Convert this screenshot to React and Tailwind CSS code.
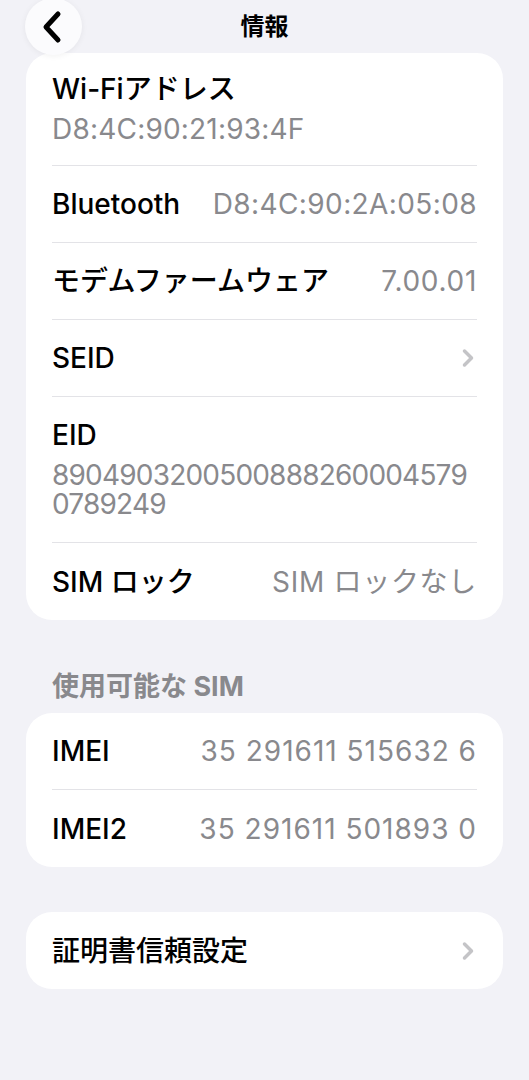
import { Fragment } from "react";
import { ChevronRight } from "lucide-react";

const font = {
  fontFamily: '"Inter", "Noto Sans CJK JP", sans-serif',
};

function Row({ label, value, chevron, last, track = "tracking-[0.7px]" }) {
  return (
    <div className="pl-[26px]">
      <div
        className={
          "mr-[26px] flex h-[77px] items-center justify-between " +
          (last ? "" : "border-b border-[#e3e3e7]")
        }
      >
        <span className="text-[28px] font-medium text-black">{label}</span>
        {value && (
          <span className={"text-[28px] text-[#89898d] " + track}>
            {value}
          </span>
        )}
        {chevron && (
          <ChevronRight
            size={28}
            strokeWidth={3}
            className="-mr-[5px] text-[#c4c4c7]"
          />
        )}
      </div>
    </div>
  );
}

function StackRow({ label, lines, first, track }) {
  return (
    <div className="pl-[26px]">
      <div
        className={
          "mr-[26px] border-b border-[#e3e3e7] " +
          (first ? "pt-[19px] pb-[21px]" : "pt-[21px] pb-[23px]")
        }
      >
        <div className="text-[28px] font-medium leading-[34px] text-black">
          {label}
        </div>
        <p
          className={
            "mt-[9px] text-[28px] leading-[29px] text-[#89898d] " + track
          }
        >
          {lines.map((l, i) => (
            <Fragment key={l}>
              {i > 0 && <br />}
              {l}
            </Fragment>
          ))}
        </p>
      </div>
    </div>
  );
}

export default function App() {
  return (
    <div className="min-h-[1080px] w-full bg-[#f2f2f7]" style={font}>
      <div className="relative flex h-[53px] items-center justify-center">
        <button className="absolute left-[25px] top-[-2px] flex h-[57px] w-[57px] items-center justify-center rounded-full bg-[#fbfbfd] shadow-[0_1px_6px_rgba(0,0,0,0.06)]">
          <svg width="22" height="34" viewBox="0 0 22 34" className="-ml-[4px]">
            <path
              d="M17 4 L5 17 L17 30"
              fill="none"
              stroke="#000"
              strokeWidth="5"
              strokeLinecap="round"
              strokeLinejoin="round"
            />
          </svg>
        </button>
        <h1 className="text-[24px] font-bold text-black">情報</h1>
      </div>

      <div className="mx-[26px] overflow-hidden rounded-[26px] bg-white">
        <StackRow
          first
          label="Wi-Fiアドレス"
          lines={["D8:4C:90:21:93:4F"]}
          track="tracking-[0.2px]"
        />
        <Row
          label="Bluetooth"
          value="D8:4C:90:2A:05:08"
          track="tracking-[0.4px]"
        />
        <Row label="モデムファームウェア" value="7.00.01" />
        <Row label="SEID" chevron />
        <StackRow
          label="EID"
          lines={["8904903200500888260004579", "0789249"]}
          track="tracking-[-0.8px]"
        />
        <Row label="SIM ロック" value="SIM ロックなし" last />
      </div>

      <div className="mt-[52px] mb-[11px] px-[52px] text-[27px] font-bold leading-[30px] text-[#89898d]">
        使用可能な SIM
      </div>

      <div className="mx-[26px] overflow-hidden rounded-[26px] bg-white">
        <Row label="IMEI" value="35 291611 515632 6" track="tracking-[1px]" />
        <Row
          label="IMEI2"
          value="35 291611 501893 0"
          track="tracking-[1px]"
          last
        />
      </div>

      <div className="mx-[26px] mt-[45px] overflow-hidden rounded-[26px] bg-white">
        <Row label="証明書信頼設定" chevron last />
      </div>
    </div>
  );
}
